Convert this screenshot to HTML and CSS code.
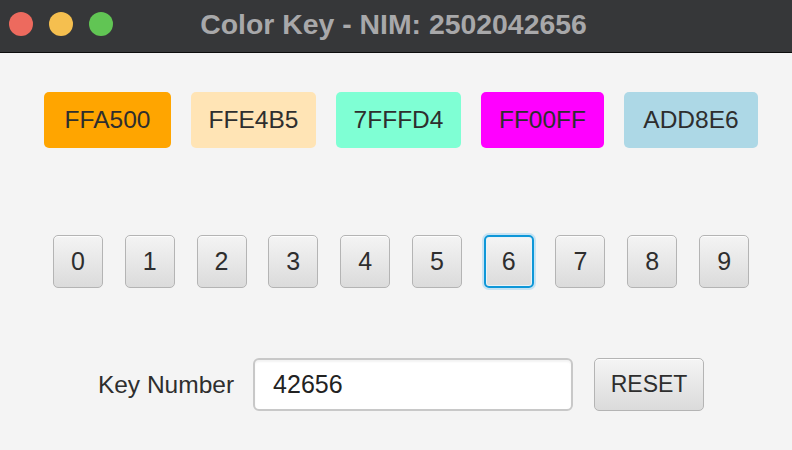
FILE: index.html
```html
<!DOCTYPE html>
<html lang="en">
<head>
<meta charset="utf-8">
<title>Color Key</title>
<link rel="stylesheet" href="styles.css">
</head>
<body>
<div class="window">
  <header class="titlebar">
    <div class="lights">
      <span class="light red"></span>
      <span class="light yellow"></span>
      <span class="light green"></span>
    </div>
    <div class="title">Color Key - NIM: 2502042656</div>
    <div class="spacer"></div>
  </header>
  <main class="content">
    <div class="chips">
      <div class="chip c1">FFA500</div>
      <div class="chip c2">FFE4B5</div>
      <div class="chip c3">7FFFD4</div>
      <div class="chip c4">FF00FF</div>
      <div class="chip c5">ADD8E6</div>
    </div>
    <div class="digits">
      <button class="btn digit">0</button>
      <button class="btn digit">1</button>
      <button class="btn digit">2</button>
      <button class="btn digit">3</button>
      <button class="btn digit">4</button>
      <button class="btn digit">5</button>
      <button class="btn digit focused">6</button>
      <button class="btn digit">7</button>
      <button class="btn digit">8</button>
      <button class="btn digit">9</button>
    </div>
    <div class="keyrow">
      <label class="label">Key Number</label>
      <div class="field">42656</div>
      <button class="btn reset">RESET</button>
    </div>
  </main>
</div>
</body>
</html>
```
FILE: styles.css
```css
* { box-sizing: border-box; }
html, body {
  margin: 0;
  padding: 0;
  background: #f4f4f4;
}
body {
  font-family: "Liberation Sans", Arial, sans-serif;
  color: #333;
}
.window {
  width: 792px;
  height: 450px;
  background: #f4f4f4;
  overflow: hidden;
}
.titlebar {
  height: 53px;
  background: #363739;
  border-bottom: 1px solid #0d0d0d;
  display: grid;
  grid-template-columns: 1fr auto 1fr;
  align-items: center;
  padding: 0 14px 4px 9px;
}
.lights {
  display: flex;
  gap: 16px;
}
.light {
  width: 24px;
  height: 24px;
  border-radius: 50%;
  display: block;
}
.red { background: #ed6a5e; }
.yellow { background: #f5bf4f; }
.green { background: #61c554; }
.title {
  color: #a8a8aa;
  font-weight: bold;
  font-size: 28.4px;
}
.content {
  padding-left: 10px;
  padding-top: 39px;
  display: flex;
  flex-direction: column;
  align-items: center;
}
.chips {
  display: flex;
  gap: 20px;
}
.chip {
  height: 56px;
  line-height: 56px;
  text-align: center;
  border-radius: 5px;
  font-size: 24.5px;
  color: #2e2e2e;
}
.c1 { background: #ffa500; width: 127px; }
.c2 { background: #ffe4b5; width: 125px; }
.c3 { background: #7fffd4; width: 125px; }
.c4 { background: #ff00ff; width: 123px; }
.c5 { background: #add8e6; width: 134px; }
.digits {
  margin-top: 87px;
  display: flex;
  gap: 21.8px;
}
.btn {
  font-family: "Liberation Sans", Arial, sans-serif;
  color: #2e2e2e;
  height: 53px;
  border: 1px solid #b4b4b4;
  border-radius: 5px;
  background: linear-gradient(#f4f4f4, #dbdbdb);
  box-shadow: inset 0 1px 0 #fdfdfd;
  padding: 0;
  margin: 0;
}
.digit {
  width: 50px;
  font-size: 25px;
}
.focused {
  border: 2px solid #0e97d8;
  box-shadow: 0 0 0 2px #c6e3f3, inset 0 0 0 1px #e9f3f8;
}
.keyrow {
  margin-top: 70px;
  display: flex;
  align-items: center;
}
.label {
  font-size: 24.5px;
  color: #2e2e2e;
  margin-right: 19px;
}
.field {
  width: 320px;
  height: 53px;
  background: #fff;
  border: 2px solid #c8c8c8;
  border-radius: 6px;
  box-shadow: inset 0 2px 2px rgba(0,0,0,0.05);
  padding-left: 18px;
  font-size: 25px;
  line-height: 49px;
  color: #222;
}
.reset {
  margin-left: 21px;
  width: 110px;
  font-size: 23px;
}
```
